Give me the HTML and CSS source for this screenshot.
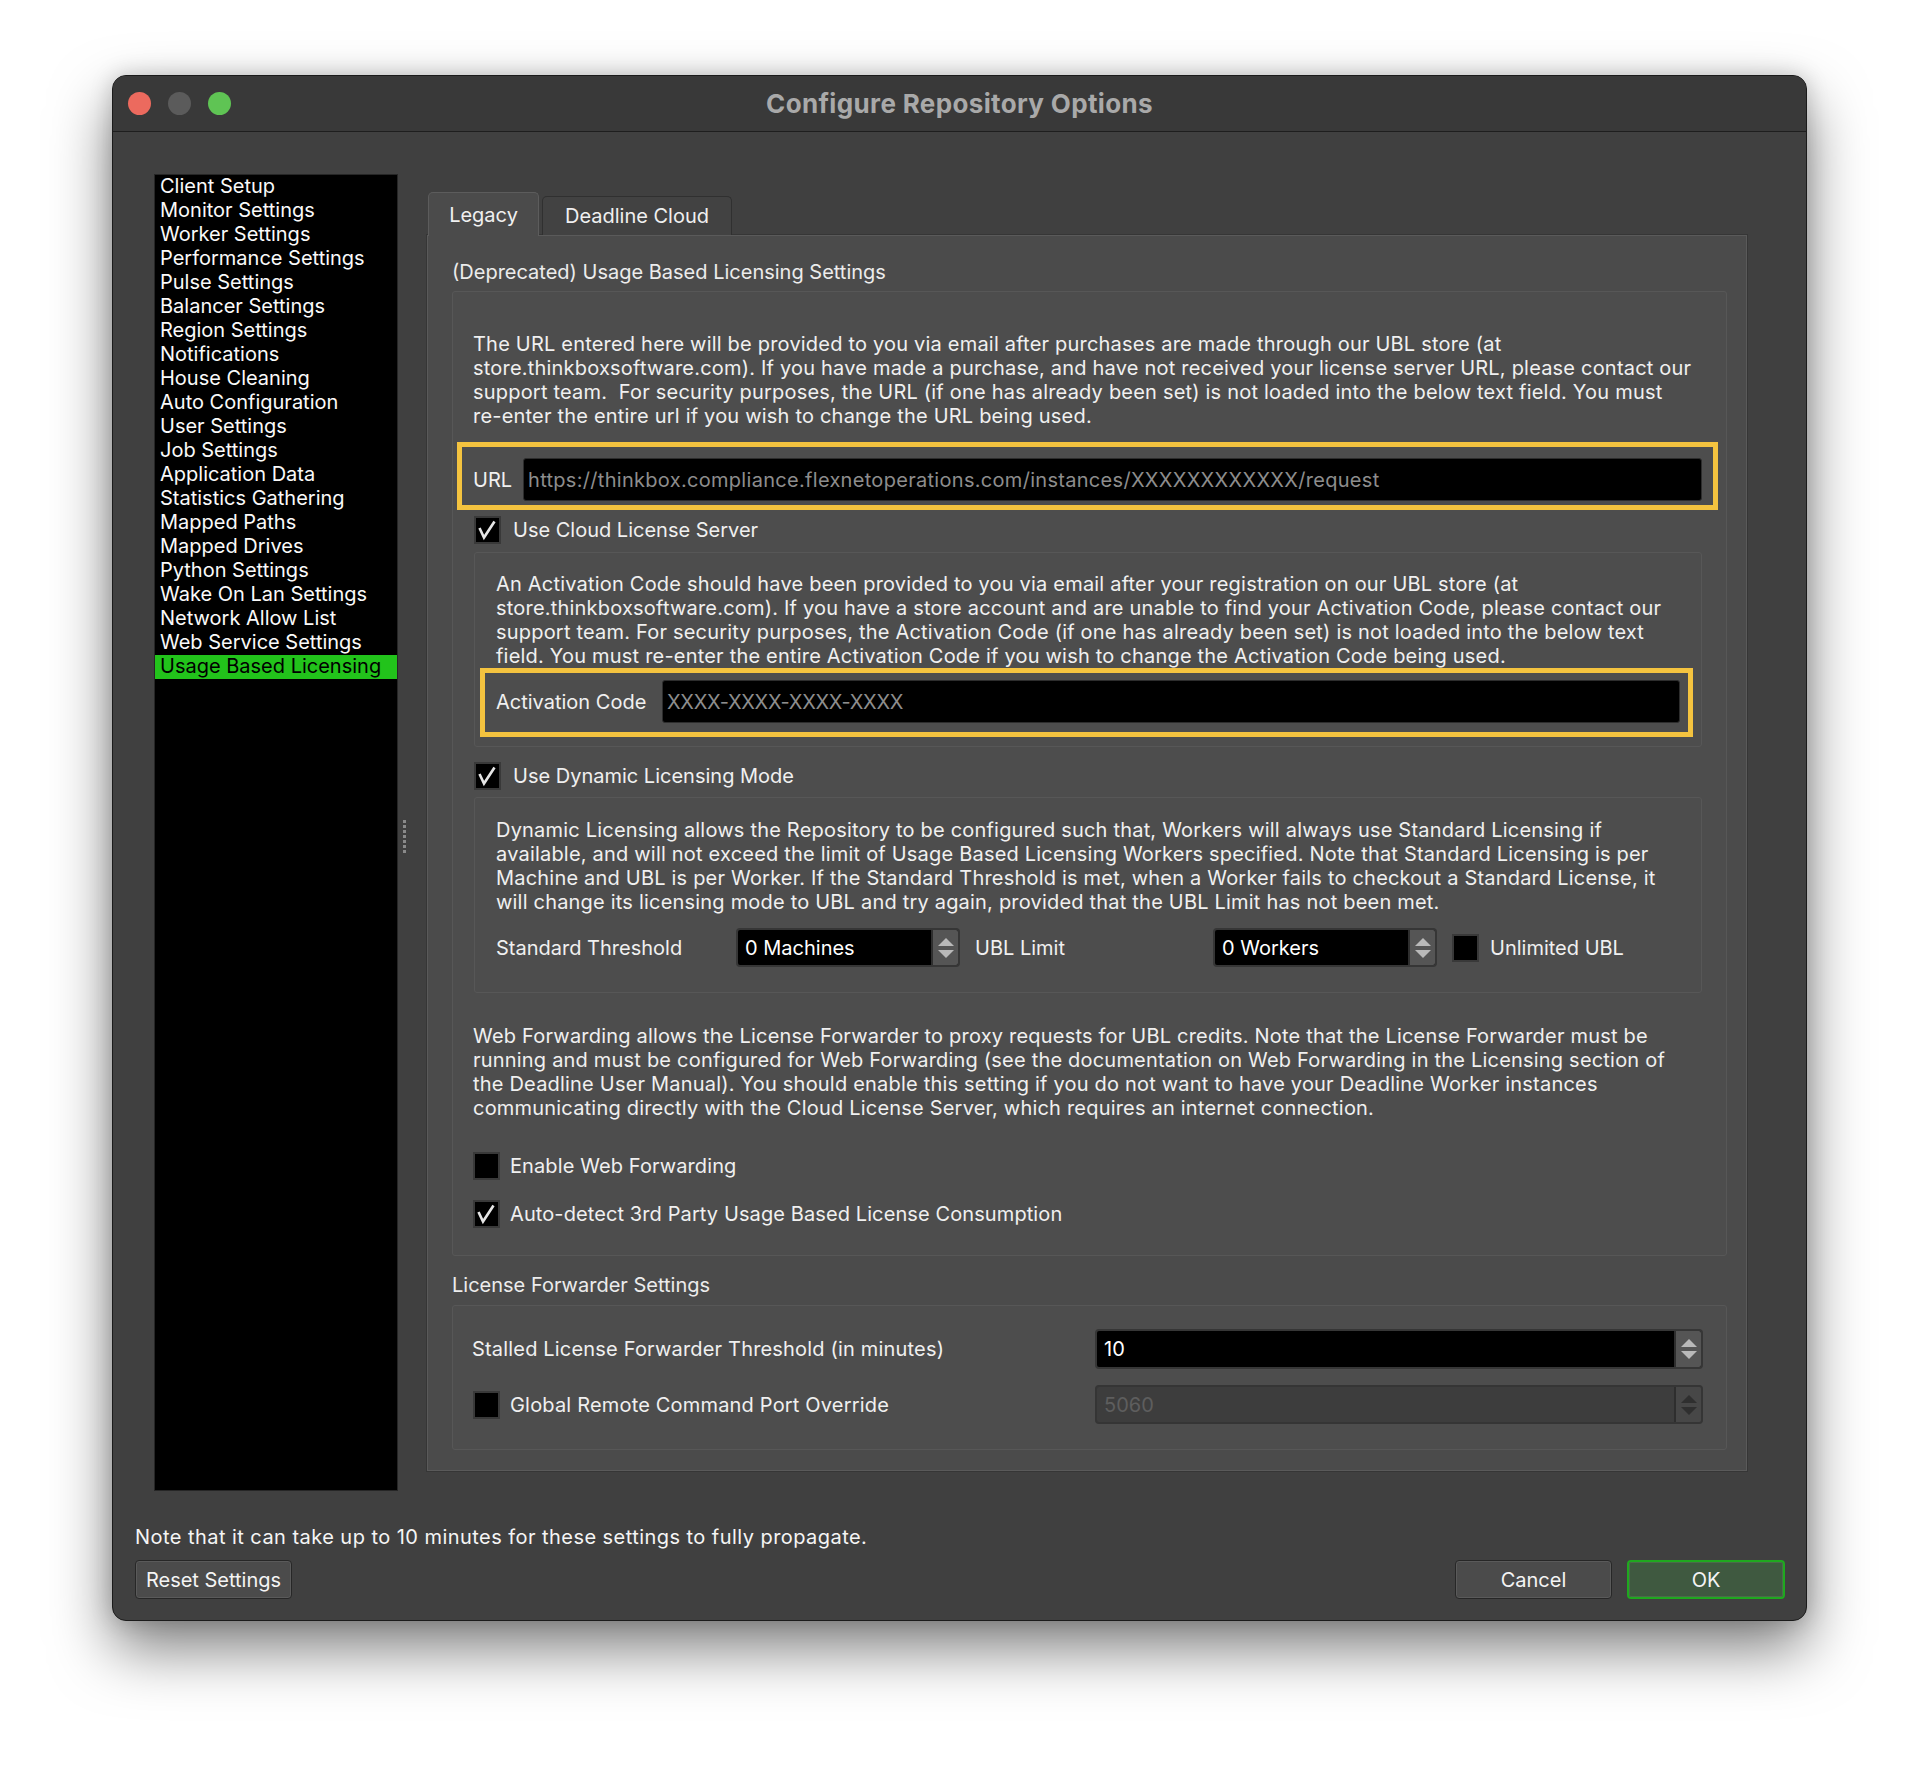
FILE: index.html
```html
<!DOCTYPE html>
<html lang="en">
<head>
<meta charset="utf-8">
<title>Configure Repository Options</title>
<link rel="stylesheet" href="styles.css">
</head>
<body>
<div class="window">
  <div class="titlebar">
    <div class="lights">
      <span class="light red"></span>
      <span class="light gray"></span>
      <span class="light green"></span>
    </div>
    <div class="title">Configure Repository Options</div>
    <div></div>
  </div>

  <div class="main">
    <ul class="sidebar">
      <li>Client Setup</li>
      <li>Monitor Settings</li>
      <li>Worker Settings</li>
      <li>Performance Settings</li>
      <li>Pulse Settings</li>
      <li>Balancer Settings</li>
      <li>Region Settings</li>
      <li>Notifications</li>
      <li>House Cleaning</li>
      <li>Auto Configuration</li>
      <li>User Settings</li>
      <li>Job Settings</li>
      <li>Application Data</li>
      <li>Statistics Gathering</li>
      <li>Mapped Paths</li>
      <li>Mapped Drives</li>
      <li>Python Settings</li>
      <li>Wake On Lan Settings</li>
      <li>Network Allow List</li>
      <li>Web Service Settings</li>
      <li class="selected">Usage Based Licensing</li>
    </ul>

    <div class="splitter"><span class="grip"></span></div>

    <div class="tabwidget">
      <div class="tabbar">
        <div class="tab active">Legacy</div>
        <div class="tab">Deadline Cloud</div>
      </div>
      <div class="pane">
        <div class="group-title">(Deprecated) Usage Based Licensing Settings</div>
        <div class="group g1">
          <div class="para">
            <div class="ln">The URL entered here will be provided to you via email after purchases are made through our UBL store (at</div>
            <div class="ln">store.thinkboxsoftware.com). If you have made a purchase, and have not received your license server URL, please contact our</div>
            <div class="ln">support team.&nbsp; For security purposes, the URL (if one has already been set) is not loaded into the below text field. You must</div>
            <div class="ln">re-enter the entire url if you wish to change the URL being used.</div>
          </div>

          <div class="hl hl-url">
            <span class="field-label url-label">URL</span>
            <div class="lineedit"><span class="placeholder url-ph">https://thinkbox.compliance.flexnetoperations.com/instances/XXXXXXXXXXXX/request</span></div>
          </div>

          <div class="check cloud-check">
            <span class="box"><svg viewBox="0 0 23 24" class="tick"><path d="M3.5 10 L8 19.5 L18.5 3.5"/></svg></span>
            <span class="check-label">Use Cloud License Server</span>
          </div>

          <div class="group g2">
            <div class="para">
              <div class="ln">An Activation Code should have been provided to you via email after your registration on our UBL store (at</div>
              <div class="ln">store.thinkboxsoftware.com). If you have a store account and are unable to find your Activation Code, please contact our</div>
              <div class="ln">support team. For security purposes, the Activation Code (if one has already been set) is not loaded into the below text</div>
              <div class="ln">field. You must re-enter the entire Activation Code if you wish to change the Activation Code being used.</div>
            </div>
            <div class="hl hl-act">
              <span class="field-label act-label">Activation Code</span>
              <div class="lineedit"><span class="placeholder act-ph">XXXX-XXXX-XXXX-XXXX</span></div>
            </div>
          </div>

          <div class="check dyn-check">
            <span class="box"><svg viewBox="0 0 23 24" class="tick"><path d="M3.5 10 L8 19.5 L18.5 3.5"/></svg></span>
            <span class="check-label">Use Dynamic Licensing Mode</span>
          </div>

          <div class="group g3">
            <div class="para">
              <div class="ln">Dynamic Licensing allows the Repository to be configured such that, Workers will always use Standard Licensing if</div>
              <div class="ln">available, and will not exceed the limit of Usage Based Licensing Workers specified. Note that Standard Licensing is per</div>
              <div class="ln">Machine and UBL is per Worker. If the Standard Threshold is met, when a Worker fails to checkout a Standard License, it</div>
              <div class="ln">will change its licensing mode to UBL and try again, provided that the UBL Limit has not been met.</div>
            </div>
            <div class="spin-row">
              <span class="sr-label">Standard Threshold</span>
              <div class="spinbox small">
                <span class="spin-value">0 Machines</span>
                <span class="spin-btns"><span class="up"></span><span class="down"></span></span>
              </div>
              <span class="sr-label ubl">UBL Limit</span>
              <div class="spinbox small">
                <span class="spin-value">0 Workers</span>
                <span class="spin-btns"><span class="up"></span><span class="down"></span></span>
              </div>
              <span class="box unl-box"></span>
              <span class="check-label unl-label">Unlimited UBL</span>
            </div>
          </div>

          <div class="para web-para">
            <div class="ln">Web Forwarding allows the License Forwarder to proxy requests for UBL credits. Note that the License Forwarder must be</div>
            <div class="ln">running and must be configured for Web Forwarding (see the documentation on Web Forwarding in the Licensing section of</div>
            <div class="ln">the Deadline User Manual). You should enable this setting if you do not want to have your Deadline Worker instances</div>
            <div class="ln">communicating directly with the Cloud License Server, which requires an internet connection.</div>
          </div>

          <div class="check web-check">
            <span class="box"></span>
            <span class="check-label">Enable Web Forwarding</span>
          </div>
          <div class="check auto-check">
            <span class="box"><svg viewBox="0 0 23 24" class="tick"><path d="M3.5 10 L8 19.5 L18.5 3.5"/></svg></span>
            <span class="check-label">Auto-detect 3rd Party Usage Based License Consumption</span>
          </div>
        </div>

        <div class="group-title lf-title">License Forwarder Settings</div>
        <div class="group g4">
          <div class="lf-row">
            <span class="lf-label">Stalled License Forwarder Threshold (in minutes)</span>
            <div class="spinbox wide">
              <span class="spin-value">10</span>
              <span class="spin-btns"><span class="up"></span><span class="down"></span></span>
            </div>
          </div>
          <div class="lf-row second">
            <span class="box"></span>
            <span class="check-label lf-check-label">Global Remote Command Port Override</span>
            <div class="spinbox wide disabled">
              <span class="spin-value">5060</span>
              <span class="spin-btns"><span class="up"></span><span class="down"></span></span>
            </div>
          </div>
        </div>
      </div>
    </div>
  </div>

  <div class="note">Note that it can take up to 10 minutes for these settings to fully propagate.</div>
  <div class="buttons">
    <button class="btn">Reset Settings</button>
    <span class="spacer"></span>
    <button class="btn">Cancel</button>
    <button class="btn ok">OK</button>
  </div>
</div>
</body>
</html>
```

FILE: styles.css
```css
* { box-sizing: border-box; }

html, body {
  margin: 0;
  padding: 0;
}

body {
  width: 1920px;
  height: 1770px;
  overflow: hidden;
  background: #ffffff;
  font-family: "Inter", "Liberation Sans", sans-serif;
  font-size: 20px;
  line-height: 24px;
  color: #f0f0f0;
}

.window {
  margin: 75px 0 0 112px;
  width: 1695px;
  height: 1546px;
  background: #404040;
  border: 1px solid #1b1b1b;
  border-radius: 14px;
  box-shadow: 0 28px 60px rgba(0, 0, 0, 0.5), 0 0 22px rgba(0, 0, 0, 0.18);
  display: flex;
  flex-direction: column;
  overflow: hidden;
}

/* Title bar */
.titlebar {
  height: 56px;
  flex: none;
  background: #393939;
  border-bottom: 1px solid #1e1e1e;
  display: grid;
  grid-template-columns: 1fr auto 1fr;
  align-items: center;
}

.lights {
  display: flex;
  gap: 17px;
  padding-left: 15px;
}

.light {
  width: 23px;
  height: 23px;
  border-radius: 50%;
  display: block;
}
.light.red { background: #ec6a5e; }
.light.gray { background: #5b5b5b; }
.light.green { background: #5fc454; }

.title {
  font-size: 26px;
  font-weight: 700;
  color: #a9a9a9;
  letter-spacing: 0.35px;
}

/* Main area */
.main {
  display: flex;
  padding: 42px 0 0 41px;
  height: 1359px;
  flex: none;
}

.sidebar {
  list-style: none;
  margin: 0;
  padding: 0;
  width: 244px;
  height: 1317px;
  background: #000;
  border: 1px solid #262626;
}

.sidebar li {
  height: 24px;
  line-height: 23px;
  padding-left: 5px;
  color: #fafafa;
  white-space: nowrap;
}

.sidebar li.selected {
  background: #22c31b;
  color: #000;
}

.splitter {
  width: 29px;
  display: flex;
  align-items: center;
}

.grip {
  display: block;
  margin: 8px 0 0 5px;
  width: 3px;
  height: 34px;
  background: repeating-linear-gradient(to bottom, #8a8a8a 0 3px, transparent 3px 5px);
}

.tabwidget {
  width: 1320px;
  margin-top: 18px;
  display: flex;
  flex-direction: column;
}

.tabbar {
  height: 43px;
  display: flex;
  align-items: flex-end;
  padding-left: 1px;
  position: relative;
  z-index: 1;
}

.tab {
  display: flex;
  align-items: center;
  justify-content: center;
  border-radius: 5px 5px 0 0;
  color: #f0f0f0;
  white-space: nowrap;
}

.tab.active {
  width: 111px;
  height: 44px;
  margin-bottom: -1px;
  background: #4b4b4b;
  border: 1px solid #5c5c5c;
  border-bottom: none;
}

.tab:not(.active) {
  width: 190px;
  height: 39px;
  margin-left: 3px;
  background: #424242;
  border: 1px solid #303030;
  border-bottom: none;
}

.pane {
  height: 1236px;
  background: #4b4b4b;
  border: 1px solid #5a5a5a;
  box-shadow: 0 0 0 1px #363636;
  padding: 24px 19px 0 24px;
}

.group-title {
  height: 24px;
  color: #ececec;
  white-space: nowrap;
}

.group {
  border: 1px solid #575757;
  border-radius: 3px;
  background: #4d4d4d;
}

.g1 {
  margin-top: 7px;
  padding: 40px 24px 27px 20px;
}

.para .ln {
  white-space: nowrap;
  height: 24px;
  letter-spacing: 0.2px;
}

/* Yellow highlight boxes */
.hl {
  border: 5px solid #f4c33f;
  display: flex;
  align-items: center;
}

.hl-url {
  margin: 14px -16px 0 -16px;
  padding: 11px 11px 4px 11px;
}

.hl-act {
  margin: 0 -13px 0 -16px;
  padding: 7px 8px 9px 11px;
}

.field-label {
  flex: none;
  white-space: nowrap;
}
.url-label { width: 50px; }
.act-label { width: 166px; }

.lineedit {
  flex: 1;
  height: 43px;
  background: #000;
  border: 1px solid #2d2d2d;
  border-radius: 3px;
  display: flex;
  align-items: center;
  padding-left: 4px;
  overflow: hidden;
}

.placeholder {
  color: #8d8d8d;
  white-space: nowrap;
}

.url-ph { letter-spacing: 0.3px; }
.act-ph { letter-spacing: -0.3px; }

/* Checkboxes */
.check {
  display: flex;
  align-items: center;
  height: 28px;
}

.box {
  flex: none;
  width: 27px;
  height: 28px;
  background: #000;
  border: 2px solid #393939;
  display: flex;
  align-items: center;
  justify-content: center;
}

.tick {
  width: 23px;
  height: 24px;
  fill: none;
  stroke: #e6e6e6;
  stroke-width: 2.6;
  stroke-linejoin: miter;
  stroke-linecap: butt;
}

.check-label {
  margin-left: 12px;
  white-space: nowrap;
}

.cloud-check { margin-top: 6px; margin-left: 1px; }
.dyn-check { margin-top: 15px; margin-left: 1px; }
.web-check { margin-top: 32px; }
.web-check .check-label, .auto-check .check-label { margin-left: 10px; letter-spacing: 0.1px; }
.auto-check { margin-top: 20px; }

.g2 {
  margin: 8px 0 0 1px;
  padding: 19px 21px 9px 21px;
}

.g3 {
  margin: 7px 0 0 1px;
  padding: 20px 21px 25px 21px;
}

.spin-row {
  margin-top: 14px;
  height: 39px;
  display: flex;
  align-items: center;
}

.sr-label {
  width: 240px;
  flex: none;
  white-space: nowrap;
}

.sr-label.ubl {
  width: 238px;
  margin-left: 15px;
}

.unl-box { margin-left: 15px; }
.unl-label { margin-left: 11px; }

/* Spin boxes */
.spinbox {
  height: 39px;
  flex: none;
  display: flex;
  background: #000;
  border: 2px solid #363636;
  border-radius: 4px;
  overflow: hidden;
}

.spinbox.small { width: 224px; }
.spinbox.wide { width: 608px; height: 40px; }

.spin-value {
  flex: 1;
  display: flex;
  align-items: center;
  padding-left: 7px;
  color: #ffffff;
  white-space: nowrap;
}

.spin-btns {
  width: 27px;
  flex: none;
  background: #555555;
  border-left: 2px solid #2e2e2e;
  display: flex;
  flex-direction: column;
  align-items: center;
  justify-content: center;
  gap: 4px;
}

.spin-btns .up {
  width: 0;
  height: 0;
  border-left: 8px solid transparent;
  border-right: 8px solid transparent;
  border-bottom: 8px solid #b9b9b9;
}

.spin-btns .down {
  width: 0;
  height: 0;
  border-left: 8px solid transparent;
  border-right: 8px solid transparent;
  border-top: 8px solid #b9b9b9;
}

.spinbox.disabled { background: #3d3d3d; border-color: #353535; }
.spinbox.disabled .spin-value { color: #5e5e5e; }
.spinbox.disabled .spin-btns { background: #474747; }
.spinbox.disabled .up { border-bottom-color: #2f2f2f; }
.spinbox.disabled .down { border-top-color: #2f2f2f; }

.web-para { margin-top: 31px; }

.lf-title { margin-top: 17px; }

.g4 {
  margin-top: 8px;
  padding: 23px 23px 25px 19px;
}

.lf-row {
  display: flex;
  align-items: center;
  height: 40px;
}

.lf-row.second {
  margin-top: 16px;
  height: 39px;
}

.lf-row .box { margin-left: 1px; }

.lf-label, .lf-check-label {
  flex: 1;
  white-space: nowrap;
  letter-spacing: 0.18px;
}

.lf-check-label { margin-left: 10px; }

.spinbox.wide.disabled { height: 39px; }

/* Footer */
.note {
  margin-top: 34px;
  padding-left: 22px;
  height: 24px;
  white-space: nowrap;
  color: #f5f5f5;
  letter-spacing: 0.45px;
}

.buttons {
  margin-top: 11px;
  padding: 0 21px 0 22px;
  height: 39px;
  display: flex;
}

.spacer { flex: 1; }

.btn {
  font: inherit;
  color: #f4f4f4;
  height: 39px;
  width: 157px;
  background: #4b4b4b;
  border: 1px solid #272727;
  border-radius: 4px;
  box-shadow: inset 0 0 0 1px #5a5a5a;
  padding: 0;
}

.btn.ok {
  width: 158px;
  margin-left: 15px;
  background: #3f5940;
  border: 2px solid #1fa81f;
  box-shadow: inset 0 0 0 1px #4a6b4a;
}
```
